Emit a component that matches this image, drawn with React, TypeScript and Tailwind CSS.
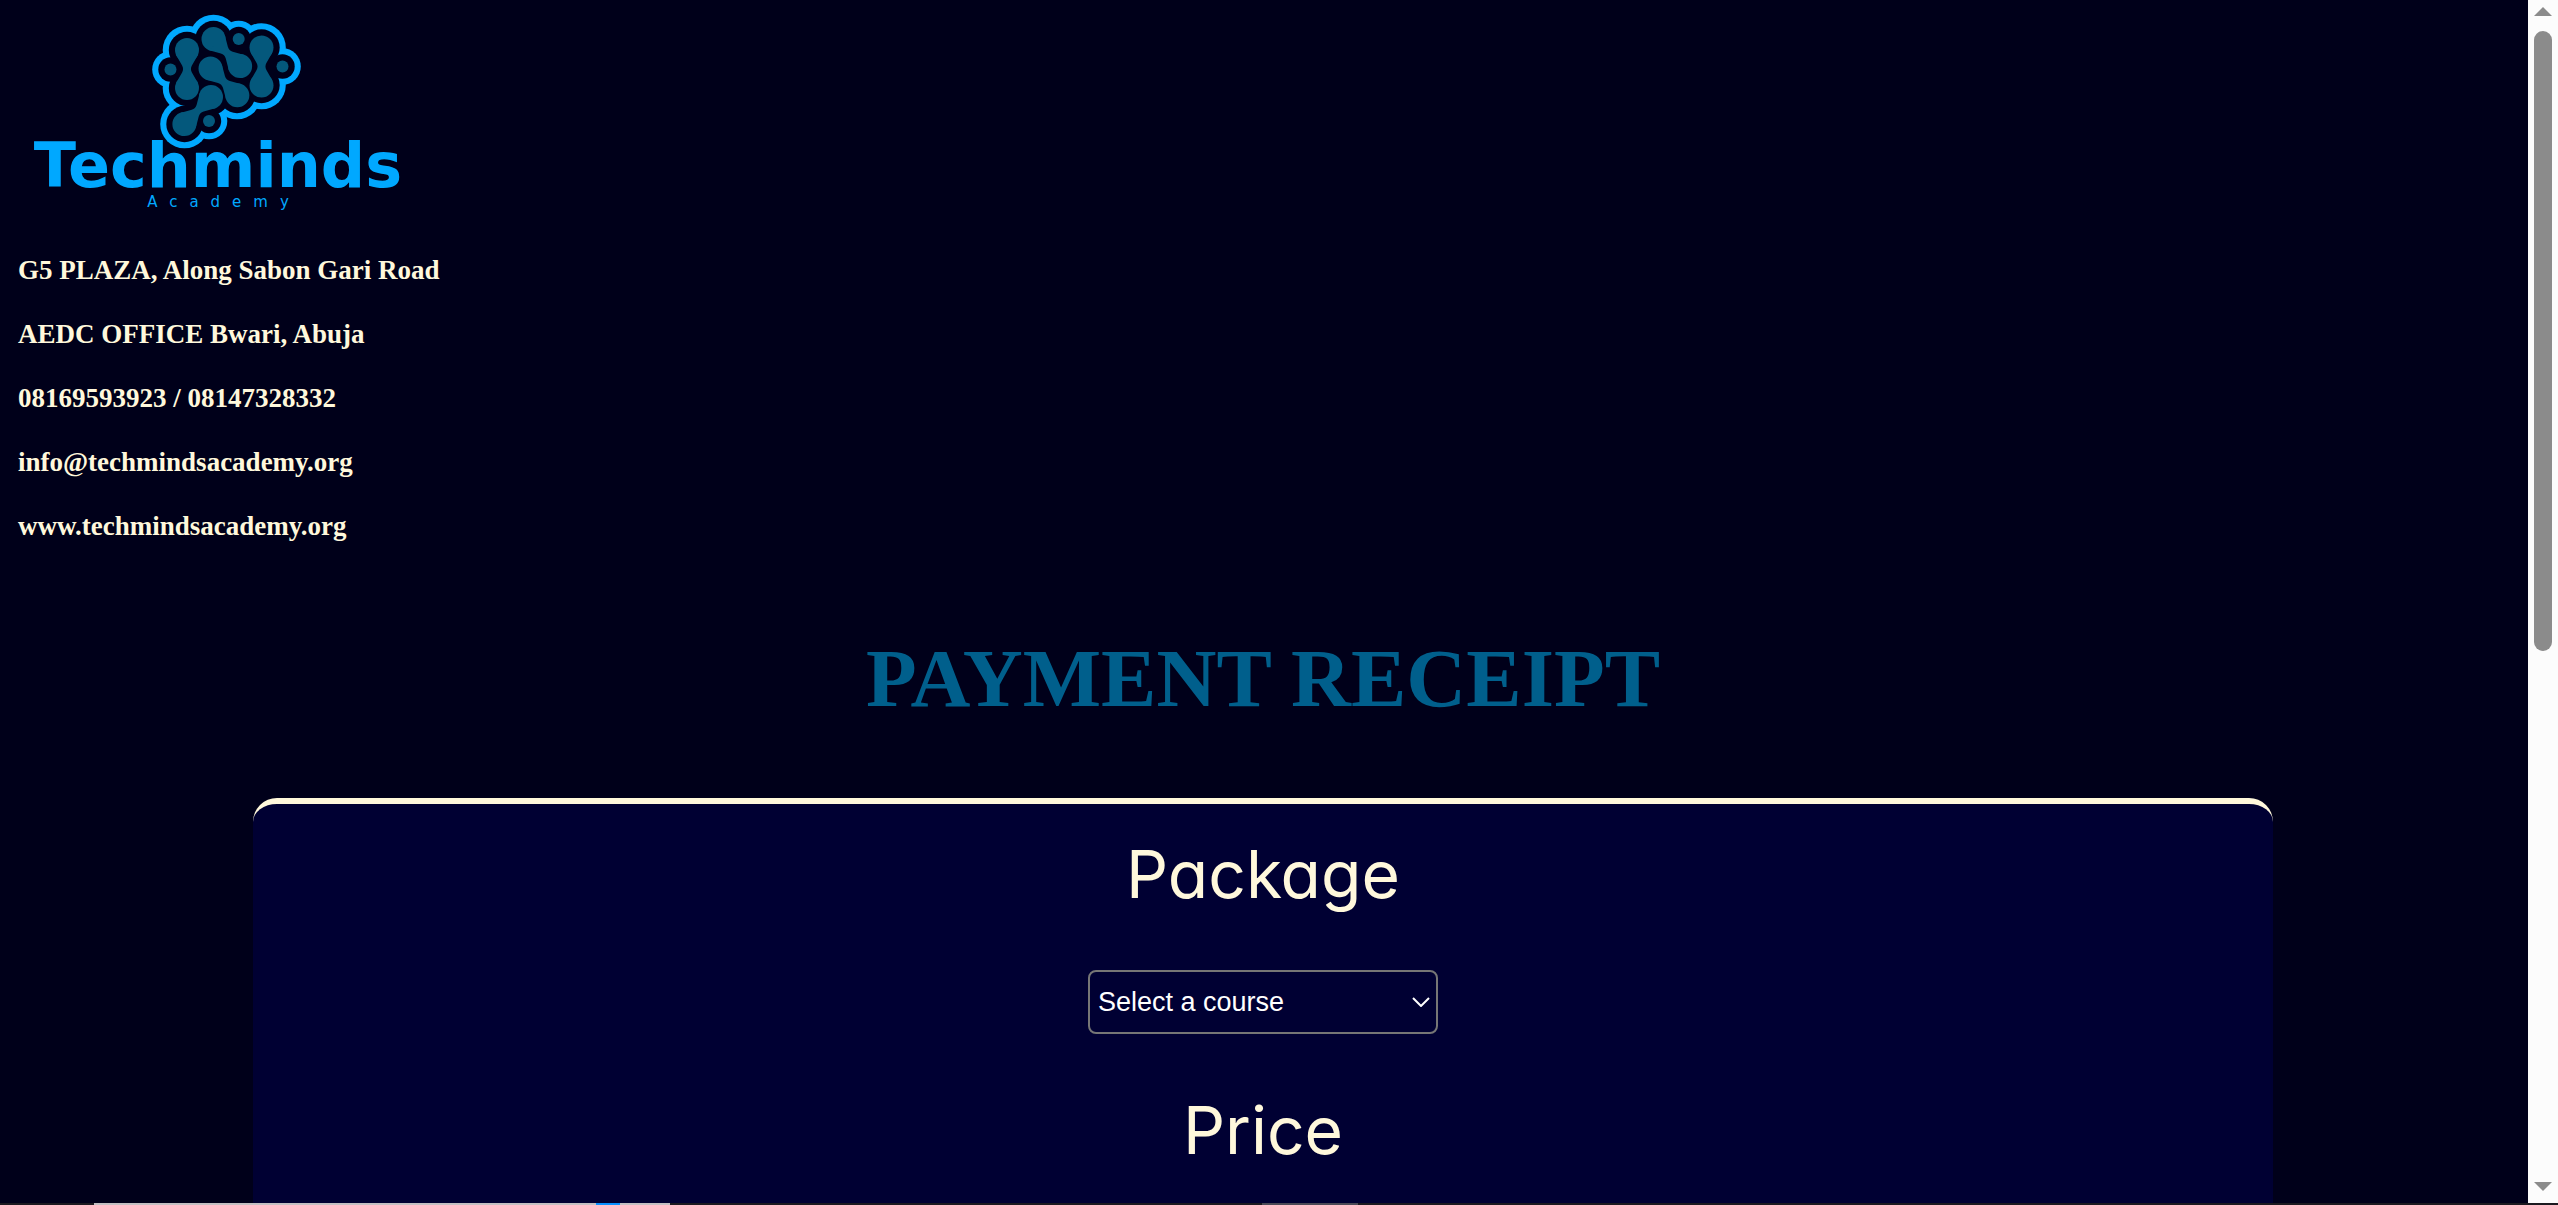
type Node = { x: number; y: number };

const links: [Node, Node][] = [
  [{ x: 187, y: 50 }, { x: 187, y: 88 }],
  [{ x: 213.5, y: 39 }, { x: 240, y: 66 }],
  [{ x: 210.5, y: 68.5 }, { x: 237, y: 95 }],
  [{ x: 261.5, y: 47.5 }, { x: 261.5, y: 85 }],
  [{ x: 211, y: 97 }, { x: 184.5, y: 124 }],
];

const dots: Node[] = [
  { x: 170.5, y: 69.5 },
  { x: 238.7, y: 39 },
  { x: 282.5, y: 66.5 },
  { x: 209, y: 121 },
];

// Circles grown around every node; drawn twice they form the brain's outline.
function Cloud({ grow, fill }: { grow: number; fill: string }) {
  return (
    <g fill={fill}>
      {links.flat().map((n, i) => (
        <circle key={i} cx={n.x} cy={n.y} r={12 + grow} />
      ))}
      {dots.map((n, i) => (
        <circle key={i} cx={n.x} cy={n.y} r={6 + grow} />
      ))}
    </g>
  );
}

function Link({ from, to }: { from: Node; to: Node }) {
  const angle = (Math.atan2(to.y - from.y, to.x - from.x) * 180) / Math.PI;
  return (
    <g transform={`translate(${from.x} ${from.y}) rotate(${angle})`}>
      <circle r="12" />
      <circle cx="38" r="12" />
      <path d="M5 10.9L15.5 4.9Q19 3 22.5 4.9L33 10.9V-10.9L22.5 -4.9Q19 -3 15.5 -4.9L5 -10.9Z" />
    </g>
  );
}

function Logo() {
  return (
    <svg viewBox="18 0 400 214" className="block w-[400px]" role="img" aria-label="Techminds Academy">
      <Cloud grow={12.3} fill="#00a8ff" />
      <Cloud grow={6.2} fill="#00001a" />
      <path
        d="M170 69L187 50L213 39L261 47L282 66L261 85L237 95L211 97L187 88Z"
        fill="#00001a"
      />
      <path d="M211 97L184 124" stroke="#00001a" strokeWidth="24" />
      <g fill="#04587c">
        {links.map(([from, to], i) => (
          <Link key={i} from={from} to={to} />
        ))}
        {dots.map((n, i) => (
          <circle key={i} cx={n.x} cy={n.y} r="6" />
        ))}
      </g>
      <text
        x="218"
        y="187"
        textAnchor="middle"
        className="fill-[#00a8ff] font-['DejaVu_Sans'] text-[62px] font-bold"
      >
        Techminds
      </text>
      <text
        x="224"
        y="207"
        textAnchor="middle"
        className="fill-[#00a8ff] font-['DejaVu_Sans'] text-[15px] tracking-[12px]"
      >
        Academy
      </text>
    </svg>
  );
}

function Scrollbar() {
  return (
    <div className="flex w-[30px] shrink-0 flex-col items-center bg-[#fcfcfc] pt-[7px] pb-3" aria-hidden="true">
      <svg viewBox="0 0 18 9" className="w-[18px] fill-[#8b8b8b]">
        <path d="M9 0L18 9H0Z" />
      </svg>
      <div className="my-[15px] w-full flex-1 px-1.5">
        <div className="h-6/11 rounded-full bg-[#8b8b8b]" />
      </div>
      <svg viewBox="0 0 18 9" className="w-[18px] fill-[#8b8b8b]">
        <path d="M0 0H18L9 9Z" />
      </svg>
    </div>
  );
}

const contact = [
  "G5 PLAZA, Along Sabon Gari Road",
  "AEDC OFFICE Bwari, Abuja",
  "08169593923 / 08147328332",
  "info@techmindsacademy.org",
  "www.techmindsacademy.org",
];

const sectionTitle =
  "font-['Inter',sans-serif] text-[66px] leading-[96px] font-normal [font-feature-settings:'cv11']";

export default function App() {
  return (
    <div className="flex h-screen flex-col overflow-hidden bg-[#00001a] text-[#fff8dc]">
      <div className="flex min-h-0 flex-1">
        <main className="min-w-0 flex-1 overflow-hidden pr-0.5 font-['Liberation_Serif',serif]">
          <header className="px-[18px]">
            <Logo />
            <address className="mt-6 text-[27px] leading-16 font-bold not-italic">
              {contact.map((line) => (
                <p key={line}>{line}</p>
              ))}
            </address>
          </header>
          <h1 className="mt-[72px] text-center text-[83px] leading-[96px] font-bold text-[#005f8c]">
            PAYMENT RECEIPT
          </h1>
          <form className="mx-auto mt-[72px] flex h-[800px] w-4/5 flex-col items-center rounded-3xl border-t-6 border-[#fff8dc] bg-[#000033] pt-[22px]">
            <label htmlFor="course" className={sectionTitle}>
              Package
            </label>
            <div className="relative mt-12 w-[350px]">
              <select
                id="course"
                className="h-16 w-full appearance-none rounded-lg border-2 border-[#767676] bg-transparent px-2 font-['Liberation_Sans',sans-serif] text-[27px] text-white"
              >
                <option>Select a course</option>
              </select>
              <svg
                viewBox="0 0 18 10"
                className="pointer-events-none absolute top-1/2 right-2 w-[18px] -translate-y-1/2 fill-none stroke-white stroke-2"
                aria-hidden="true"
              >
                <path d="M1 1L9 9L17 1" />
              </svg>
            </div>
            <h2 className={`mt-12 ${sectionTitle}`}>Price</h2>
          </form>
        </main>
        <Scrollbar />
      </div>
      <div className="flex h-0.5 shrink-0 bg-[#1b1a20]" aria-hidden="true">
        <div className="ml-[94px] flex w-[576px] bg-[#c2c0c2]">
          <div className="ml-[502px] w-6 bg-[#0a90ff]" />
        </div>
        <div className="ml-[592px] w-24 bg-[#4a4a56]" />
      </div>
    </div>
  );
}
